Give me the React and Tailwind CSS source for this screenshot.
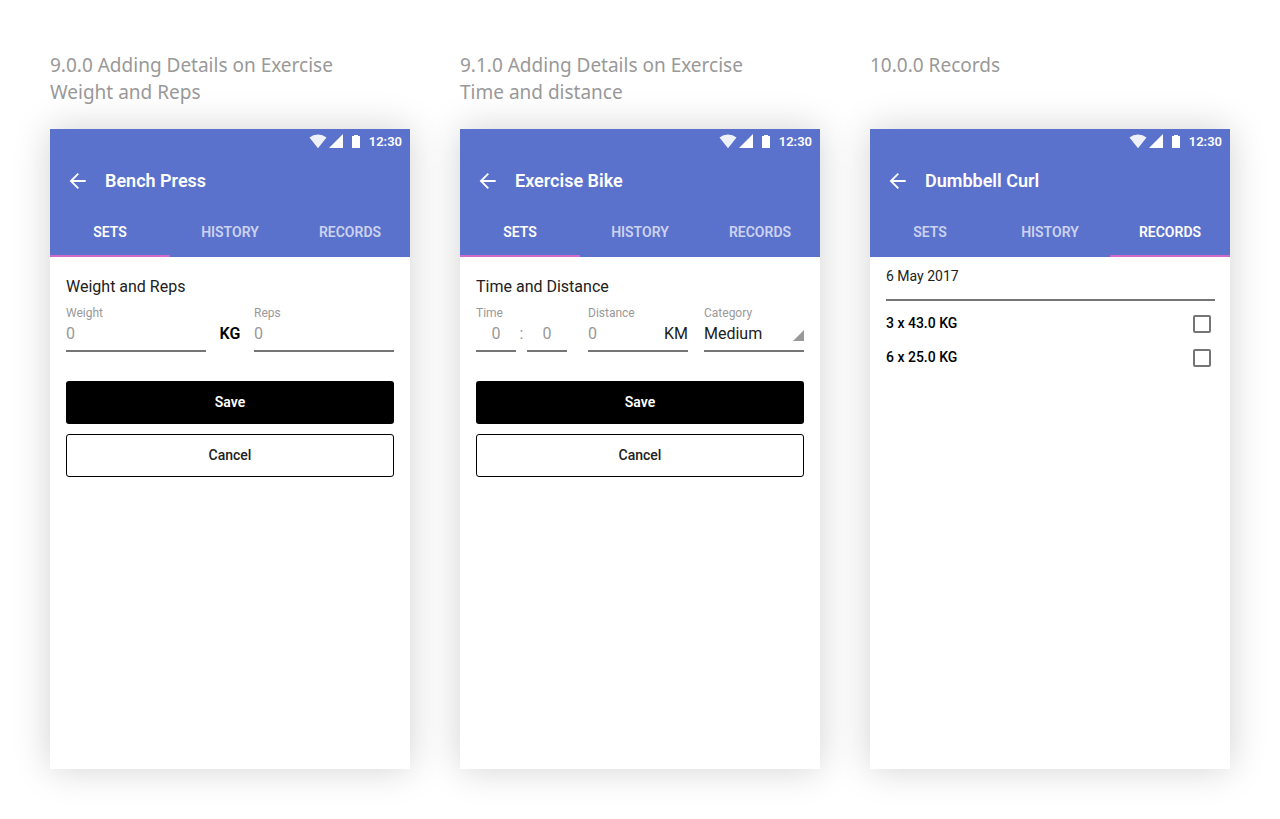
import React, { useId, useState } from 'react';

const TABS = ['SETS', 'HISTORY', 'RECORDS'];

const StatusBar = () => (
  <div className="flex h-6 items-center justify-end pt-px pr-2 text-white">
    <svg className="h-4 w-[18px]" viewBox="0 0 18 16" fill="currentColor" fillOpacity="0.9">
      <path d="M.5 3.5A13.3 13.3 0 0 1 9 .5a13.3 13.3 0 0 1 8.5 3L9 14.3z" />
    </svg>
    <svg className="ml-0.5 h-4 w-3.5" viewBox="0 0 14 16" fill="currentColor">
      <path d="M0 14 14 0v14z" />
    </svg>
    <svg className="ml-[9px] h-4 w-2" viewBox="0 0 8 16" fill="currentColor">
      <path d="M0 2h2V1h4v1h2v12H0z" />
    </svg>
    <span className="ml-[9px] text-[13px] leading-4 font-semibold">12:30</span>
  </div>
);

const AppBar = ({ title }) => (
  <div className="flex h-14 items-center px-4 text-white">
    <button type="button" aria-label="Back" className="size-6">
      <svg viewBox="0 0 24 24" fill="none" stroke="currentColor" strokeWidth="1.8">
        <path d="M19.7 12H4.8M12.3 4.6 4.9 12l7.4 7.4" />
      </svg>
    </button>
    <h2 className="ml-[15px] text-lg leading-6 font-semibold">{title}</h2>
  </div>
);

const Tabs = ({ active, onChange }) => (
  <div role="tablist" className="grid h-12 grid-cols-3 text-sm font-semibold">
    {TABS.map(tab => (
      <button
        key={tab}
        type="button"
        role="tab"
        aria-selected={tab === active}
        onClick={() => onChange(tab)}
        className={
          tab === active
            ? 'border-b-2 border-[#d36bc6] text-white'
            : 'border-b-2 border-transparent text-white/70'
        }
      >
        {tab}
      </button>
    ))}
  </div>
);

const Screen = ({ caption, title, tab, children }) => {
  const [active, setActive] = useState(tab);

  return (
    <section className="flex flex-col">
      <h1 className="mb-[23px] min-h-[54px] font-['Noto_Sans',sans-serif] text-[19px] leading-[27px] text-[#999999]">
        {caption.map(line => (
          <span key={line} className="block">
            {line}
          </span>
        ))}
      </h1>
      <div className="min-h-[640px] bg-white shadow-[0_0_35px_rgba(0,0,0,0.18)]">
        <header className="bg-[#5b72cd]">
          <StatusBar />
          <AppBar title={title} />
          <Tabs active={active} onChange={setActive} />
        </header>
        {children}
      </div>
    </section>
  );
};

const labelClass = 'block text-xs leading-4 text-[#999999]';
const inputClass =
  'h-[31px] w-full min-w-0 border-b-2 border-[#757575] pb-1 text-base leading-5 text-[#212121] outline-none placeholder:text-[#999999]';

const Field = ({ label, unit }) => {
  const id = useId();

  return (
    <div className="min-w-0 flex-1">
      <label htmlFor={id} className={labelClass}>
        {label}
      </label>
      <div className="flex">
        <input id={id} type="text" placeholder="0" className={inputClass} />
        {unit && (
          <span className="h-[31px] border-b-2 border-[#757575] pt-[3px] text-base leading-5 text-[#212121]">
            {unit}
          </span>
        )}
      </div>
    </div>
  );
};

const Actions = () => (
  <div className="mt-[29px] space-y-2.5">
    <button
      type="submit"
      className="block h-[43px] w-full rounded-[3px] bg-black pb-0.5 text-sm font-semibold text-white"
    >
      Save
    </button>
    <button
      type="button"
      className="block h-[43px] w-full rounded-[3px] border border-black pb-0.5 text-sm font-medium text-[#212121]"
    >
      Cancel
    </button>
  </div>
);

const DetailsForm = ({ title, children }) => (
  <form className="px-4 pt-[18px]" onSubmit={e => e.preventDefault()}>
    <h3 className="mb-1.5 text-base leading-6 text-[#212121]">{title}</h3>
    {children}
    <Actions />
  </form>
);

const WeightForm = () => (
  <DetailsForm title="Weight and Reps">
    <div className="flex">
      <Field label="Weight" />
      <span className="w-12 pt-[19px] text-center text-base leading-5 font-semibold text-black">
        KG
      </span>
      <Field label="Reps" />
    </div>
  </DetailsForm>
);

const DistanceForm = () => (
  <DetailsForm title="Time and Distance">
    <div className="grid grid-cols-[96px_1fr_1fr] gap-4">
      <div>
        <label htmlFor="time-minutes" className={labelClass}>
          Time
        </label>
        <div className="flex">
          <div className="w-10">
            <input
              id="time-minutes"
              type="text"
              placeholder="0"
              className={`${inputClass} text-center`}
            />
          </div>
          <span className="w-[11px] pt-[3px] text-center text-base leading-5 text-[#999999]">
            :
          </span>
          <div className="w-10">
            <input
              type="text"
              aria-label="Time, seconds"
              placeholder="0"
              className={`${inputClass} text-center`}
            />
          </div>
        </div>
      </div>
      <Field label="Distance" unit="KM" />
      <div>
        <label htmlFor="category" className={labelClass}>
          Category
        </label>
        <div className="flex items-end border-b-2 border-[#757575]">
          <select
            id="category"
            defaultValue="Medium"
            className="h-[29px] min-w-0 flex-1 appearance-none pb-1 text-base leading-5 text-[#212121] outline-none"
          >
            <option>Easy</option>
            <option>Medium</option>
            <option>Hard</option>
          </select>
          <svg className="mb-[9px] size-[11px] fill-[#999999]" viewBox="0 0 11 11">
            <path d="M11 0v11H0z" />
          </svg>
        </div>
      </div>
    </div>
  </DetailsForm>
);

const records = ['3 x 43.0 KG', '6 x 25.0 KG'];

const RecordList = () => (
  <div className="pr-[15px] pl-4">
    <h3 className="border-b-2 border-[#757575] pt-[9px] pb-[13px] text-sm leading-5 text-[#212121]">
      6 May 2017
    </h3>
    <ul className="pt-1.5">
      {records.map(record => (
        <li key={record}>
          <label className="flex h-[34px] items-center justify-between pr-1 text-sm font-medium text-black">
            <span className="pb-0.5">{record}</span>
            <input
              type="checkbox"
              className="size-[18px] appearance-none rounded-[2px] border-2 border-[#757575] checked:bg-[#757575]"
            />
          </label>
        </li>
      ))}
    </ul>
  </div>
);

export default function App() {
  return (
    <main className="grid grid-cols-3 gap-[50px] bg-white px-[50px] pt-[52px] pb-[50px] font-['Roboto',sans-serif]">
      <Screen
        caption={['9.0.0 Adding Details on Exercise', 'Weight and Reps']}
        title="Bench Press"
        tab="SETS"
      >
        <WeightForm />
      </Screen>
      <Screen
        caption={['9.1.0 Adding Details on Exercise', 'Time and distance']}
        title="Exercise Bike"
        tab="SETS"
      >
        <DistanceForm />
      </Screen>
      <Screen caption={['10.0.0 Records']} title="Dumbbell Curl" tab="RECORDS">
        <RecordList />
      </Screen>
    </main>
  );
}
